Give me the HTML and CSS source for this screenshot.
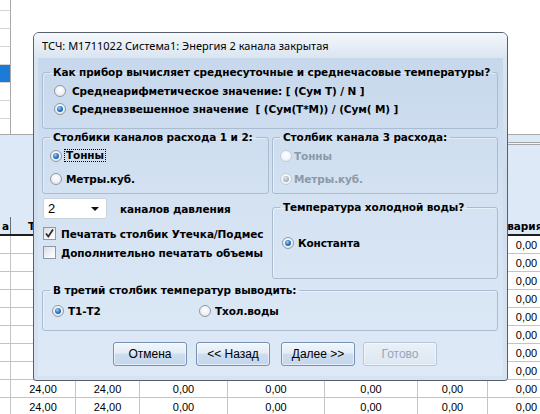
FILE: index.html
```html
<!DOCTYPE html>
<html lang="ru">
<head>
<meta charset="utf-8">
<title>ТСЧ</title>
<link rel="stylesheet" href="styles.css">
</head>
<body>
<div class="bg">
  <div class="top">
    <div class="list">
      <div class="li"></div><div class="li"></div><div class="li"></div><div class="li"></div>
      <div class="li sel"></div><div class="li"></div><div class="li"></div><div class="li"></div>
    </div>
  </div>
  <div class="band"><div class="dline"></div></div>
  <div class="tbl">
    <div class="tr th">
      <div class="c r">а</div><div class="c">Тпод</div><div class="c"></div><div class="c"></div><div class="c"></div><div class="c"></div><div class="c"></div><div class="c l">Авария</div>
    </div>
    <div class="tr"><div class="c"></div><div class="c"></div><div class="c"></div><div class="c"></div><div class="c"></div><div class="c"></div><div class="c"></div><div class="c">0,00</div></div>
    <div class="tr"><div class="c"></div><div class="c"></div><div class="c"></div><div class="c"></div><div class="c"></div><div class="c"></div><div class="c"></div><div class="c">0,00</div></div>
    <div class="tr"><div class="c"></div><div class="c"></div><div class="c"></div><div class="c"></div><div class="c"></div><div class="c"></div><div class="c"></div><div class="c">0,00</div></div>
    <div class="tr"><div class="c"></div><div class="c"></div><div class="c"></div><div class="c"></div><div class="c"></div><div class="c"></div><div class="c"></div><div class="c">0,00</div></div>
    <div class="tr"><div class="c"></div><div class="c"></div><div class="c"></div><div class="c"></div><div class="c"></div><div class="c"></div><div class="c"></div><div class="c">0,00</div></div>
    <div class="tr"><div class="c"></div><div class="c"></div><div class="c"></div><div class="c"></div><div class="c"></div><div class="c"></div><div class="c"></div><div class="c">0,00</div></div>
    <div class="tr"><div class="c"></div><div class="c"></div><div class="c"></div><div class="c"></div><div class="c"></div><div class="c"></div><div class="c"></div><div class="c">0,00</div></div>
    <div class="tr"><div class="c"></div><div class="c"></div><div class="c"></div><div class="c"></div><div class="c"></div><div class="c"></div><div class="c"></div><div class="c">0,00</div></div>
    <div class="tr"><div class="c"></div><div class="c">24,00</div><div class="c">24,00</div><div class="c">0,00</div><div class="c">0,00</div><div class="c">0,00</div><div class="c">0,00</div><div class="c">0,00</div></div>
    <div class="tr"><div class="c"></div><div class="c">24,00</div><div class="c">24,00</div><div class="c">0,00</div><div class="c">0,00</div><div class="c">0,00</div><div class="c">0,00</div><div class="c">0,00</div></div>
  </div>
</div>

<div class="dlg">
  <div class="title">ТСЧ: М1711022 Система1: Энергия 2 канала закрытая</div>
  <div class="client">
    <fieldset class="g">
      <legend>Как прибор вычисляет среднесуточные и среднечасовые температуры?</legend>
      <div class="gc g1">
        <div class="row r18"><span class="rb"></span><span class="t1">Среднеарифметическое значение: [ (Сум Т) / N ]</span></div>
        <div class="row r18"><span class="rb on"></span><span class="t1">Средневзвешенное значение&nbsp; [ (Сум(Т*М)) / (Сум( М) ]</span></div>
      </div>
    </fieldset>

    <div class="cols">
      <div class="col">
        <fieldset class="g">
          <legend>Столбики каналов расхода 1 и 2:</legend>
          <div class="gc g2">
            <div class="row r23"><span class="rb on"></span><span class="focus">Тонны</span></div>
            <div class="row r23"><span class="rb"></span><span class="t2">Метры.куб.</span></div>
          </div>
        </fieldset>
        <div class="comborow">
          <div class="combo"><span class="cv">2</span><span class="arrow"></span></div>
          <span class="clabel">каналов давления</span>
        </div>
        <div class="row r19 first"><span class="cb on"><svg width="11" height="11" viewBox="0 0 11 11"><path d="M2 5.5 L4.3 8.5 L9 1.5" fill="none" stroke="#2a2a2a" stroke-width="1.7"/></svg></span><span class="t3">Печатать столбик Утечка/Подмес</span></div>
        <div class="row r19"><span class="cb"></span><span class="t3">Дополнительно печатать объемы</span></div>
      </div>
      <div class="col">
        <fieldset class="g">
          <legend>Столбик канала 3 расхода:</legend>
          <div class="gc g3">
            <div class="row r23 dis"><span class="rb"></span><span class="t4">Тонны</span></div>
            <div class="row r23 dis"><span class="rb on"></span><span class="t4">Метры.куб.</span></div>
          </div>
        </fieldset>
        <fieldset class="g mt7">
          <legend>Температура холодной воды?</legend>
          <div class="gc g4">
            <div class="row r20"><span class="rb on"></span><span class="t5">Константа</span></div>
          </div>
        </fieldset>
      </div>
    </div>

    <fieldset class="g mt5">
      <legend>В третий столбик температур выводить:</legend>
      <div class="gc g5">
        <div class="row r20">
          <div class="opt w147"><span class="rb on"></span><span class="t2">Т1-Т2</span></div>
          <div class="opt"><span class="rb"></span><span class="t2">Тхол.воды</span></div>
        </div>
      </div>
    </fieldset>

    <div class="btns">
      <div class="btn">Отмена</div>
      <div class="btn">&lt;&lt; Назад</div>
      <div class="btn">Далее &gt;&gt;</div>
      <div class="btn off">Готово</div>
    </div>
  </div>
</div>
</body>
</html>
```
FILE: styles.css
```css
html, body {
  margin: 0;
  padding: 0;
}
body {
  width: 540px;
  height: 414px;
  overflow: hidden;
  position: relative;
  background: #ffffff;
  font-family: "Liberation Sans", Arial, sans-serif;
  font-size: 11px;
  color: #000;
}

/* ---------- background window ---------- */
.top {
  height: 134px;
  overflow: hidden;
}
.list {
  width: 10px;
  margin-top: -7px;
  border-right: 1px solid #a8a8a8;
}
.li {
  height: 17px;
  border-bottom: 1px solid #d4d4d4;
}
.li.sel {
  background: #1c7bd6;
}
.band {
  height: 82px;
  border-top: 1px solid #a8a8a8;
  background: #dde9f6;
  overflow: hidden;
}
.dline {
  margin: 7px 0 0 40px;
  height: 1px;
  border-top: 1px solid #a4a4a4;
  border-bottom: 1px solid #a4a4a4;
  background: #f4f4f4;
}
.tbl {
  display: flex;
  flex-direction: column;
}
.tr {
  display: grid;
  grid-template-columns: 11px 65px 64px 88px 97px 93px 70px 78px;
  height: 17px;
  border-bottom: 1px solid #c4c4c4;
  background: #fff;
}
.tr.th {
  height: 17px;
  border-bottom: 2px solid #1e1e1e;
  background: #dde9f6;
  font-family: "DejaVu Sans", sans-serif;
  font-weight: bold;
}
.c {
  border-right: 1px solid #c4c4c4;
  display: flex;
  align-items: center;
  justify-content: center;
  white-space: nowrap;
  overflow: hidden;
  font-size: 11px;
}
.th .c {
  border-right-color: #6e6e6e;
  font-size: 10.5px;
}
.c.r {
  justify-content: flex-end;
  padding-right: 1px;
}
.c.l {
  justify-content: flex-start;
  padding-left: 11px;
}

/* ---------- dialog ---------- */
.dlg {
  position: absolute;
  left: 33px;
  top: 32px;
  width: 473px;
  height: 347px;
  border: 1px solid #56606c;
  border-radius: 6px 6px 3px 3px;
  background: linear-gradient(#dbe6f2, #cfdded 40%, #d7e3f1);
  display: flex;
  flex-direction: column;
}
.title {
  height: 25px;
  flex: none;
  padding-left: 8px;
  display: flex;
  align-items: center;
  font-family: "Noto Sans", "Open Sans", sans-serif;
  font-size: 11px;
  color: #000;
  border-radius: 5px 5px 0 0;
  background: linear-gradient(#f5f8fb, #e4ecf5 60%, #dae5f1);
  white-space: nowrap;
}
.client {
  margin: 0 4px 4px 4px;
  flex: 1;
  padding: 8px 5px 0 4px;
  background: linear-gradient(#c7d8ec, #d4e2f2 45%, #dde9f6);
  font-family: "DejaVu Sans", sans-serif;
  font-weight: bold;
  font-size: 10.5px;
  letter-spacing: -0.1px;
  display: flex;
  flex-direction: column;
}

.g {
  margin: 0;
  padding: 0;
  min-width: 0;
  border: 1px solid #a9bcd2;
  border-radius: 3px;
  box-shadow: inset 1px 1px 0 rgba(255,255,255,0.45);
}
.g legend {
  padding: 0 3px;
  margin-left: 7px;
  line-height: 13px;
  white-space: nowrap;
}
.mt7 { margin-top: 7px; }
.mt5 { margin-top: 5px; }

.g1 { padding: 3px 0 10px 11px; }
.g2 { padding: 0 0 3px 7px; }
.g3 { padding: 0 0 3px 7px; }
.g4 { padding: 19px 0 25px 9px; }
.g5 { padding: 4px 0 9px 9px; }

.cols {
  display: grid;
  grid-template-columns: 227px 226px;
  column-gap: 3px;
  margin-top: 2px;
}
.col {
  display: flex;
  flex-direction: column;
}

.row {
  display: flex;
  align-items: center;
  white-space: nowrap;
}
.r18 { height: 18px; }
.r19 { height: 19px; }
.r20 { height: 20px; }
.r23 { height: 23px; }
.row.first { margin-top: 5px; }

.opt {
  display: flex;
  align-items: center;
}
.w147 { width: 147px; }

.t1 { margin-left: 6px; }
.t2 { margin-left: 4px; }
.t3 { margin-left: 5px; }
.t4 { margin-left: 2px; }
.t5 { margin-left: 4px; }

.focus {
  margin-left: 2px;
  padding: 0 1px;
  line-height: 11px;
  border: 1px dotted #000;
}

.dis { color: #8d99a6; }

/* radio */
.rb {
  width: 12px;
  height: 12px;
  flex: none;
  box-sizing: border-box;
  border-radius: 50%;
  border: 1px solid #8d99a8;
  background: radial-gradient(circle at 50% 40%, #ffffff 0%, #eef1f5 55%, #d2d9e2 100%);
  display: flex;
  align-items: center;
  justify-content: center;
}
.rb.on::after {
  content: "";
  width: 6px;
  height: 6px;
  border-radius: 50%;
  background: radial-gradient(circle at 40% 35%, #a6d6fa 0%, #3583d6 40%, #123d80 100%);
}
.dis .rb {
  border-color: #c3ccd6;
  background: radial-gradient(circle at 50% 40%, #ffffff 0%, #f1f4f7 60%, #e2e7ec 100%);
}
.dis .rb.on::after {
  background: radial-gradient(circle at 40% 35%, #dfe6ee 0%, #a6b4c4 60%, #8d9db0 100%);
}

/* checkbox */
.cb {
  width: 13px;
  height: 13px;
  flex: none;
  box-sizing: border-box;
  margin-left: 1px;
  border: 1px solid #8d99a8;
  background: linear-gradient(135deg, #d9dfe6, #f6f8fa 70%, #ffffff);
  display: flex;
  align-items: center;
  justify-content: center;
}

/* combo */
.comborow {
  margin-top: 4px;
  display: flex;
  align-items: center;
  height: 21px;
}
.combo {
  margin-left: 1px;
  width: 64px;
  height: 21px;
  box-sizing: border-box;
  border: 1px solid #c9d3de;
  border-radius: 2px;
  background: #fff;
  display: flex;
  align-items: center;
  justify-content: space-between;
  padding: 0 7px 0 4px;
}
.cv {
  font-family: "Liberation Sans", Arial, sans-serif;
  font-weight: normal;
  font-size: 13px;
}
.arrow {
  width: 0;
  height: 0;
  border-left: 4px solid transparent;
  border-right: 4px solid transparent;
  border-top: 4px solid #111;
}
.clabel {
  margin-left: 13px;
}

/* buttons */
.btns {
  display: flex;
  margin-top: 11px;
  padding-left: 71px;
  gap: 9px;
}
.btn {
  width: 74px;
  height: 24px;
  box-sizing: border-box;
  border: 1px solid #7890b2;
  border-radius: 3px;
  background: linear-gradient(#f2f6fb 0%, #e3ecf6 45%, #cddcee 52%, #c4d7ee 100%);
  box-shadow: inset 0 0 0 1px rgba(255,255,255,0.55);
  display: flex;
  align-items: center;
  justify-content: center;
  font-family: "Liberation Sans", Arial, sans-serif;
  font-weight: normal;
  font-size: 12px;
  letter-spacing: 0;
  color: #000;
}
.btn:nth-child(3) { margin-left: 2px; }
.btn:nth-child(4) { margin-left: -1px; }
.btn.off {
  border-color: #b6c5d8;
  background: linear-gradient(#eaf0f7, #dce7f3);
  color: #97a6b7;
}
```
